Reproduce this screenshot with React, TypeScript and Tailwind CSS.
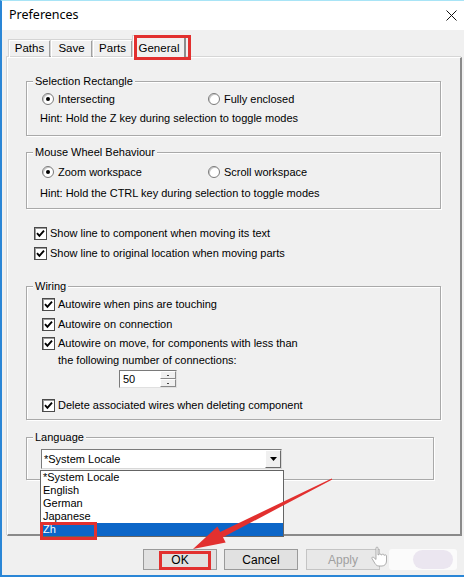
import React from "react";

function Check() {
  return (
    <span className="w-[13px] h-[13px] shrink-0 bg-white border border-[#4a4a4a] shadow-[inset_1px_1px_0_#9a9a9a] flex items-center justify-center">
      <svg width="9" height="9" viewBox="0 0 9 9">
        <path d="M1 4.2 L3.4 6.8 L8 1.6" stroke="#000" strokeWidth="1.9" fill="none" />
      </svg>
    </span>
  );
}

function Radio({ on }: { on: boolean }) {
  return (
    <span className="w-[12px] h-[12px] shrink-0 rounded-full bg-white border border-[#7a7a7a] shadow-[inset_1px_1px_0_#c8c8c8] flex items-center justify-center">
      {on && <span className="w-[4px] h-[4px] rounded-full bg-black" />}
    </span>
  );
}

function Group({ title, className, children }: { title: string; className: string; children?: React.ReactNode }) {
  return (
    <div className={"relative border border-[#a9a9a9] shadow-[inset_1px_1px_0_#ffffff,1px_1px_0_#ffffff] " + className}>
      <span className="absolute left-[6px] -top-[8px] px-[2px] bg-[#f0f0f0] leading-[14px]">{title}</span>
      {children}
    </div>
  );
}

function Btn({ label, disabled }: { label: string; disabled?: boolean }) {
  return (
    <div
      className={
        disabled
          ? "w-[74px] h-[21px] border border-[#c4c4c4] bg-[#e8e8e8] text-[#a0a0a0] flex items-center justify-center text-[12px]"
          : "w-[74px] h-[21px] border border-[#9a9a9a] bg-[#e1e1e1] text-black flex items-center justify-center text-[12px]"
      }
    >
      {label}
    </div>
  );
}

export default function App() {
  return (
    <div className="relative w-[464px] h-[577px] overflow-hidden bg-[#f0f0f0] border-l-2 border-l-[#2a86d6] border-t border-t-[#a8e4f6] border-b-2 border-b-[#2a86d6] text-[11px] text-black font-['Liberation_Sans',Arial,sans-serif]">
      {/* Title bar */}
      <div className="h-[29px] bg-white flex items-center justify-between pl-[7px] pr-[7px]">
        <span className="text-[12.5px] font-['Noto_Sans',sans-serif] text-black">Preferences</span>
        <svg width="11" height="11" viewBox="0 0 11 11">
          <path d="M0.5 0.5 L10.5 10.5 M10.5 0.5 L0.5 10.5" stroke="#111" strokeWidth="1" />
        </svg>
      </div>

      {/* Tabs */}
      <div className="mt-[6px] h-[21px] flex items-end pl-[7px] text-[11.5px]">
        <div className="w-[42px] h-[17px] flex items-center justify-center border-l border-t border-l-[#ffffff] border-t-[#ffffff] border-r-2 border-r-[#a0a0a0] shadow-[-1px_-1px_0_#d4d4d4]">Paths</div>
        <div className="w-[42px] h-[17px] flex items-center justify-center border-l border-t border-l-[#ffffff] border-t-[#ffffff] border-r-2 border-r-[#a0a0a0] shadow-[-1px_-1px_0_#d4d4d4]">Save</div>
        <div className="w-[40px] h-[17px] flex items-center justify-center border-l border-t border-l-[#ffffff] border-t-[#ffffff] border-r-2 border-r-[#a0a0a0] shadow-[-1px_-1px_0_#d4d4d4]">Parts</div>
        <div className="relative z-10 -mb-[1px] w-[53px] h-[22px] flex items-start pt-[3px] justify-center bg-[#f0f0f0] border-l border-t border-l-[#ffffff] border-t-[#ffffff] border-r-2 border-r-[#8c8c8c] shadow-[-1px_-1px_0_#d4d4d4]">General</div>
      </div>

      {/* Panel */}
      <div className="ml-[5px] w-[455px] h-[479px] border border-t-[#ffffff] border-l-[#ffffff] border-r-2 border-r-[#8a8a8a] border-b-2 border-b-[#8a8a8a] shadow-[-1px_-1px_0_#d6d6d6] bg-[#f0f0f0]">
        {/* Selection Rectangle */}
        <Group title="Selection Rectangle" className="ml-[18px] mt-[23px] w-[415px] h-[55px]">
          <div className="pl-[15px] pt-[9px]">
            <div className="flex items-center h-[16px]">
              <div className="w-[166px] flex items-center gap-[4px]">
                <Radio on />
                <span>Intersecting</span>
              </div>
              <div className="flex items-center gap-[4px]">
                <Radio on={false} />
                <span>Fully enclosed</span>
              </div>
            </div>
            <div className="-ml-[2px] mt-[3px] h-[16px] flex items-center">Hint: Hold the Z key during selection to toggle modes</div>
          </div>
        </Group>

        {/* Mouse Wheel */}
        <Group title="Mouse Wheel Behaviour" className="ml-[18px] mt-[16px] w-[415px] h-[57px]">
          <div className="pl-[15px] pt-[11px]">
            <div className="flex items-center h-[16px]">
              <div className="w-[166px] flex items-center gap-[4px]">
                <Radio on />
                <span>Zoom workspace</span>
              </div>
              <div className="flex items-center gap-[4px]">
                <Radio on={false} />
                <span>Scroll workspace</span>
              </div>
            </div>
            <div className="-ml-[2px] mt-[5px] h-[16px] flex items-center">Hint: Hold the CTRL key during selection to toggle modes</div>
          </div>
        </Group>

        {/* Loose checkboxes */}
        <div className="ml-[26px] mt-[16px] flex items-center gap-[3px] h-[16px]">
          <Check />
          <span>Show line to component when moving its text</span>
        </div>
        <div className="ml-[26px] mt-[4px] flex items-center gap-[3px] h-[16px]">
          <Check />
          <span>Show line to original location when moving parts</span>
        </div>

        {/* Wiring */}
        <Group title="Wiring" className="ml-[18px] mt-[25px] w-[415px] h-[134px]">
          <div className="pl-[15px] pt-[9px]">
            <div className="flex items-center gap-[3px] h-[16px]">
              <Check />
              <span>Autowire when pins are touching</span>
            </div>
            <div className="mt-[4px] flex items-center gap-[3px] h-[16px]">
              <Check />
              <span>Autowire on connection</span>
            </div>
            <div className="mt-[3px] flex items-start gap-[3px]">
              <div className="h-[17px] flex items-center">
                <Check />
              </div>
              <div className="leading-[17px]">
                <div>Autowire on move, for components with less than</div>
                <div>the following number of connections:</div>
                <div className="mt-[1px] ml-[61px] w-[58px] h-[18px] flex border border-[#7a7a7a] border-r-[#e0e0e0] border-b-[#e0e0e0] bg-white">
                  <div className="flex-1 flex items-center pl-[3px] leading-[14px]">50</div>
                  <div className="w-[16px] flex flex-col">
                    <div className="flex-1 bg-[#f0f0f0] border border-[#ffffff] border-r-[#8a8a8a] border-b-[#8a8a8a] flex items-center justify-center">
                      <span className="w-[2px] h-[1px] bg-[#444]" />
                    </div>
                    <div className="flex-1 bg-[#f0f0f0] border border-[#ffffff] border-r-[#8a8a8a] border-b-[#8a8a8a] flex items-center justify-center">
                      <span className="w-[2px] h-[1px] bg-[#444]" />
                    </div>
                  </div>
                </div>
              </div>
            </div>
            <div className="mt-[9px] flex items-center gap-[3px] h-[16px]">
              <Check />
              <span>Delete associated wires when deleting component</span>
            </div>
          </div>
        </Group>

        {/* Language */}
        <Group title="Language" className="ml-[18px] mt-[17px] w-[408px] h-[43px]">
          <div className="pl-[14px] pt-[11px]">
            <div className="relative w-[241px] h-[20px] bg-white border border-[#7a7a7a] border-r-[#d8d8d8] border-b-[#d8d8d8] flex items-center">
              <span className="flex-1 pl-[2px]">*System Locale</span>
              <div className="w-[16px] h-[18px] bg-[#f0f0f0] border border-[#ffffff] border-r-[#6a6a6a] border-b-[#6a6a6a] flex items-center justify-center">
                <svg width="7" height="4" viewBox="0 0 7 4">
                  <path d="M0 0 H7 L3.5 4 Z" fill="#000" />
                </svg>
              </div>
              {/* dropdown list */}
              <div className="absolute z-20 left-[-2px] top-[20px] w-[244px] h-[67px] bg-white border border-[#646464]">
                <div className="h-[13px] leading-[13px] pl-[2px]">*System Locale</div>
                <div className="h-[13px] leading-[13px] pl-[2px]">English</div>
                <div className="h-[13px] leading-[13px] pl-[2px]">German</div>
                <div className="h-[13px] leading-[13px] pl-[2px]">Japanese</div>
                <div className="h-[13px] leading-[13px] pl-[2px] bg-[#0c66c8] text-white">Zh</div>
              </div>
            </div>
          </div>
        </Group>
      </div>

      {/* Buttons */}
      <div className="mt-[13px] ml-[141px] flex items-center">
        <Btn label="OK" />
        <div className="ml-[7px]">
          <Btn label="Cancel" />
        </div>
        <div className="ml-[8px]">
          <Btn label="Apply" disabled />
        </div>
        <div className="ml-[9px] w-[68px] h-[21px] bg-[#fbfbfb] rounded-[3px] flex items-center justify-end pr-[4px]">
          <div className="w-[40px] h-[19px] rounded-full bg-[#ebe6f0]" />
        </div>
      </div>

      {/* Overlays: annotations */}
      <div className="pointer-events-none absolute -left-[2px] -top-[1px] w-[464px] h-[577px] z-30">
        <div className="absolute left-[134px] top-[35px] w-[57px] h-[25px] border-[3px] border-[#e2302f]" />
        <div className="absolute left-[40px] top-[522px] w-[57px] h-[18px] border-[3px] border-[#e2302f]" />
        <div className="absolute left-[159px] top-[551px] w-[52px] h-[19px] border-[3px] border-[#e2302f]" />
        <svg className="absolute left-0 top-0" width="464" height="577" viewBox="0 0 464 577">
          <polygon
            points="331.7,478.5 332.3,479.5 223,537.3 225.7,542.6 193,549 217.5,526.6 220.2,531.9"
            fill="#e2302f"
          />
        </svg>
        {/* cursor */}
        <svg className="absolute left-[370px] top-[546px]" width="18" height="22" viewBox="0 0 18 22">
          <path d="M6 2 C6 0.8 8 0.8 8 2 V9 L9 8.5 C9.5 7.5 11 7.8 11 9 L12 8.7 C12.5 7.8 14 8 14 9.3 L14.5 9.2 C15 8.5 16.5 8.8 16.5 10 V15 C16.5 18 14.5 20 12 20 H9 C7 20 6 19 5 17.5 L2 12.5 C1.5 11.5 2.8 10.5 3.8 11.5 L6 13.5 Z" fill="#fff" stroke="#9a9a9a" strokeWidth="0.8" />
        </svg>
      </div>
    </div>
  );
}
